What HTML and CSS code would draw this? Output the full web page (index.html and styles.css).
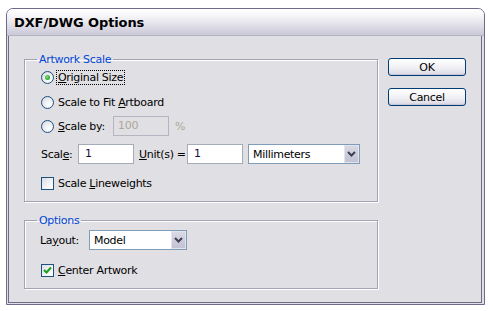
FILE: index.html
```html
<!DOCTYPE html>
<html>
<head>
<meta charset="utf-8">
<title>DXF/DWG Options</title>
<link rel="stylesheet" href="styles.css">
</head>
<body>
<div class="window">
  <div class="titlebar">DXF/DWG Options</div>
  <div class="client">
    <div class="groups">
      <fieldset class="group artwork">
        <legend>Artwork Scale</legend>
        <div class="row r1"><span class="radio on"></span><span class="lbl focus"><u>O</u>riginal Size</span></div>
        <div class="row r2"><span class="radio"></span><span class="lbl">Scale to Fit <u>A</u>rtboard</span></div>
        <div class="row r3"><span class="radio"></span><span class="lbl w-by"><u>S</u>cale by:</span><span class="field disabled f-by">100</span><span class="pct">%</span></div>
        <div class="row r4"><span class="lbl-plain w-scale">Scal<u>e</u>:</span><span class="field f-num">1</span><span class="lbl-plain w-units"><u>U</u>nit(s) =</span><span class="field f-num">1</span><span class="select s-units"><span class="val">Millimeters</span><span class="drop"><svg width="9" height="6" viewBox="0 0 9 6"><polyline points="1,1 4.5,4.5 8,1" fill="none" stroke="#3f3f55" stroke-width="2"/></svg></span></span></div>
        <div class="row r5"><span class="check"></span><span class="lbl">Scale <u>L</u>ineweights</span></div>
      </fieldset>
      <fieldset class="group options">
        <legend>Options</legend>
        <div class="row o1"><span class="lbl-plain w-layout">La<u>y</u>out:</span><span class="select s-layout"><span class="val">Model</span><span class="drop"><svg width="9" height="6" viewBox="0 0 9 6"><polyline points="1,1 4.5,4.5 8,1" fill="none" stroke="#3f3f55" stroke-width="2"/></svg></span></span></div>
        <div class="row o2"><span class="check on"><svg width="11" height="11" viewBox="0 0 11 11"><polyline points="2,5 4.5,7.5 9,2.5" fill="none" stroke="#21a121" stroke-width="2.2"/></svg></span><span class="lbl"><u>C</u>enter Artwork</span></div>
      </fieldset>
    </div>
    <div class="buttons">
      <button class="btn">OK</button>
      <button class="btn">Cancel</button>
    </div>
  </div>
</div>
</body>
</html>
```

FILE: styles.css
```css
html, body {
  margin: 0;
  padding: 0;
  background: #ffffff;
}
body {
  font-family: "DejaVu Sans", sans-serif;
  font-size: 11px;
  letter-spacing: -0.3px;
  color: #000;
}
.window {
  margin: 8px 0 0 6px;
  width: 479px;
  height: 297px;
  box-sizing: border-box;
  border: 1px solid #6d6c8b;
  border-radius: 7px 7px 0 0;
  background: #e0dfe3;
  display: flex;
  flex-direction: column;
  overflow: hidden;
}
.titlebar {
  height: 27px;
  box-sizing: border-box;
  padding: 1px 0 0 7px;
  line-height: 26px;
  font-weight: bold;
  font-size: 13px;
  letter-spacing: -0.1px;
  color: #000;
  background: linear-gradient(#ffffff 0%, #f4f4f7 30%, #dcdbe5 70%, #c9c8d6 100%);
  border-bottom: 1px solid #b3b2c4;
}
.client {
  flex: 1;
  margin: 0 2px 1px 1px;
  border: 1px solid #6d6c8b;
  border-top: none;
  display: flex;
  align-items: flex-start;
  padding: 17px 0 0 15px;
  gap: 10px;
}
.groups {
  display: flex;
  flex-direction: column;
}
.group {
  margin: 0;
  width: 354px;
  box-sizing: border-box;
  padding: 0 0 0 12px;
  border: 1px solid #a3a2b4;
  box-shadow: inset 1px 1px 0 #ffffff, 1px 1px 0 #ffffff;
  min-width: 0;
}
.group legend {
  padding: 0 2px;
  line-height: 13px;
  color: #0046d5;
}
.artwork { padding-top: 1px; padding-bottom: 8px; }
.options { margin-top: 12px; padding-top: 3px; padding-bottom: 8px; }
.row {
  height: 20px;
  display: flex;
  align-items: center;
  margin-left: 4px;
  white-space: nowrap;
}
.r2 { margin-top: 5px; }
.r3 { margin-top: 4px; }
.r4 { margin-top: 8px; }
.r5 { margin-top: 9px; }
.o2 { margin-top: 10px; }
.lbl {
  margin-left: 2px;
  padding: 0 1px;
  border: 1px dotted transparent;
  line-height: 13px;
}
.lbl.focus { border-color: #000; }
.lbl-plain { line-height: 13px; white-space: nowrap; }
.w-by { width: 50px; }
.w-scale { width: 37px; flex: none; }
.w-units { width: 48px; margin-left: 5px; flex: none; }
.w-layout { width: 49px; margin-left: -1px; flex: none; }
.radio {
  width: 13px;
  height: 13px;
  box-sizing: border-box;
  border: 1px solid #1c5180;
  border-radius: 50%;
  background: radial-gradient(circle at 65% 65%, #ffffff 0%, #eeeef2 45%, #cfcfd8 100%);
  display: flex;
  align-items: center;
  justify-content: center;
  flex: none;
}
.radio.on::after {
  content: "";
  width: 5px;
  height: 5px;
  border-radius: 50%;
  background: radial-gradient(circle at 40% 40%, #8ee08e 0%, #2fb12f 55%, #1e8f1e 100%);
}
.check {
  width: 13px;
  height: 13px;
  box-sizing: border-box;
  border: 1px solid #1c5180;
  background: linear-gradient(135deg, #dcdce4 0%, #f5f5f8 60%, #ffffff 100%);
  display: flex;
  align-items: center;
  justify-content: center;
  flex: none;
}
.check svg { display: block; }
.field {
  height: 20px;
  box-sizing: border-box;
  border: 1px solid #a5acb5;
  background: #fff;
  padding: 0 0 0 6px;
  line-height: 18px;
  color: #1a0a3a;
  flex: none;
}
.field.disabled {
  background: #e0dfe3;
  border-color: #b5b4c0;
  color: #aca899;
}
.f-by { width: 56px; margin-left: 3px; padding-left: 4px; }
.pct { margin-left: 6px; color: #aca899; }
.f-num { width: 56px; }
.select {
  height: 20px;
  box-sizing: border-box;
  border: 1px solid #7f9db9;
  background: #fff;
  display: flex;
  align-items: stretch;
  flex: none;
}
.select .val {
  flex: 1;
  padding-left: 3px;
  line-height: 18px;
  border: 1px solid #fff;
  border-right: none;
}
.select .drop {
  width: 15px;
  box-sizing: border-box;
  border: 1px solid #e4e4ee;
  background: linear-gradient(#d9d8e4, #c3c2d4);
  display: flex;
  align-items: center;
  justify-content: center;
}
.s-units { width: 112px; margin-left: 5px; }
.s-layout { width: 98px; }
.buttons {
  display: flex;
  flex-direction: column;
  gap: 12px;
  padding-top: 5px;
}
.btn {
  width: 78px;
  height: 18px;
  box-sizing: border-box;
  border: 1px solid #003c74;
  border-radius: 3px;
  background: linear-gradient(#ffffff 0%, #f2f2f6 50%, #e2e1ea 85%, #d2d1de 100%);
  box-shadow: inset 0 -1px 0 #c9c8d8;
  font-family: "DejaVu Sans", sans-serif;
  font-size: 11px;
  letter-spacing: -0.3px;
  color: #000;
  padding: 0;
  line-height: 15px;
}
u { text-decoration: underline; text-underline-offset: 1px; }
```
